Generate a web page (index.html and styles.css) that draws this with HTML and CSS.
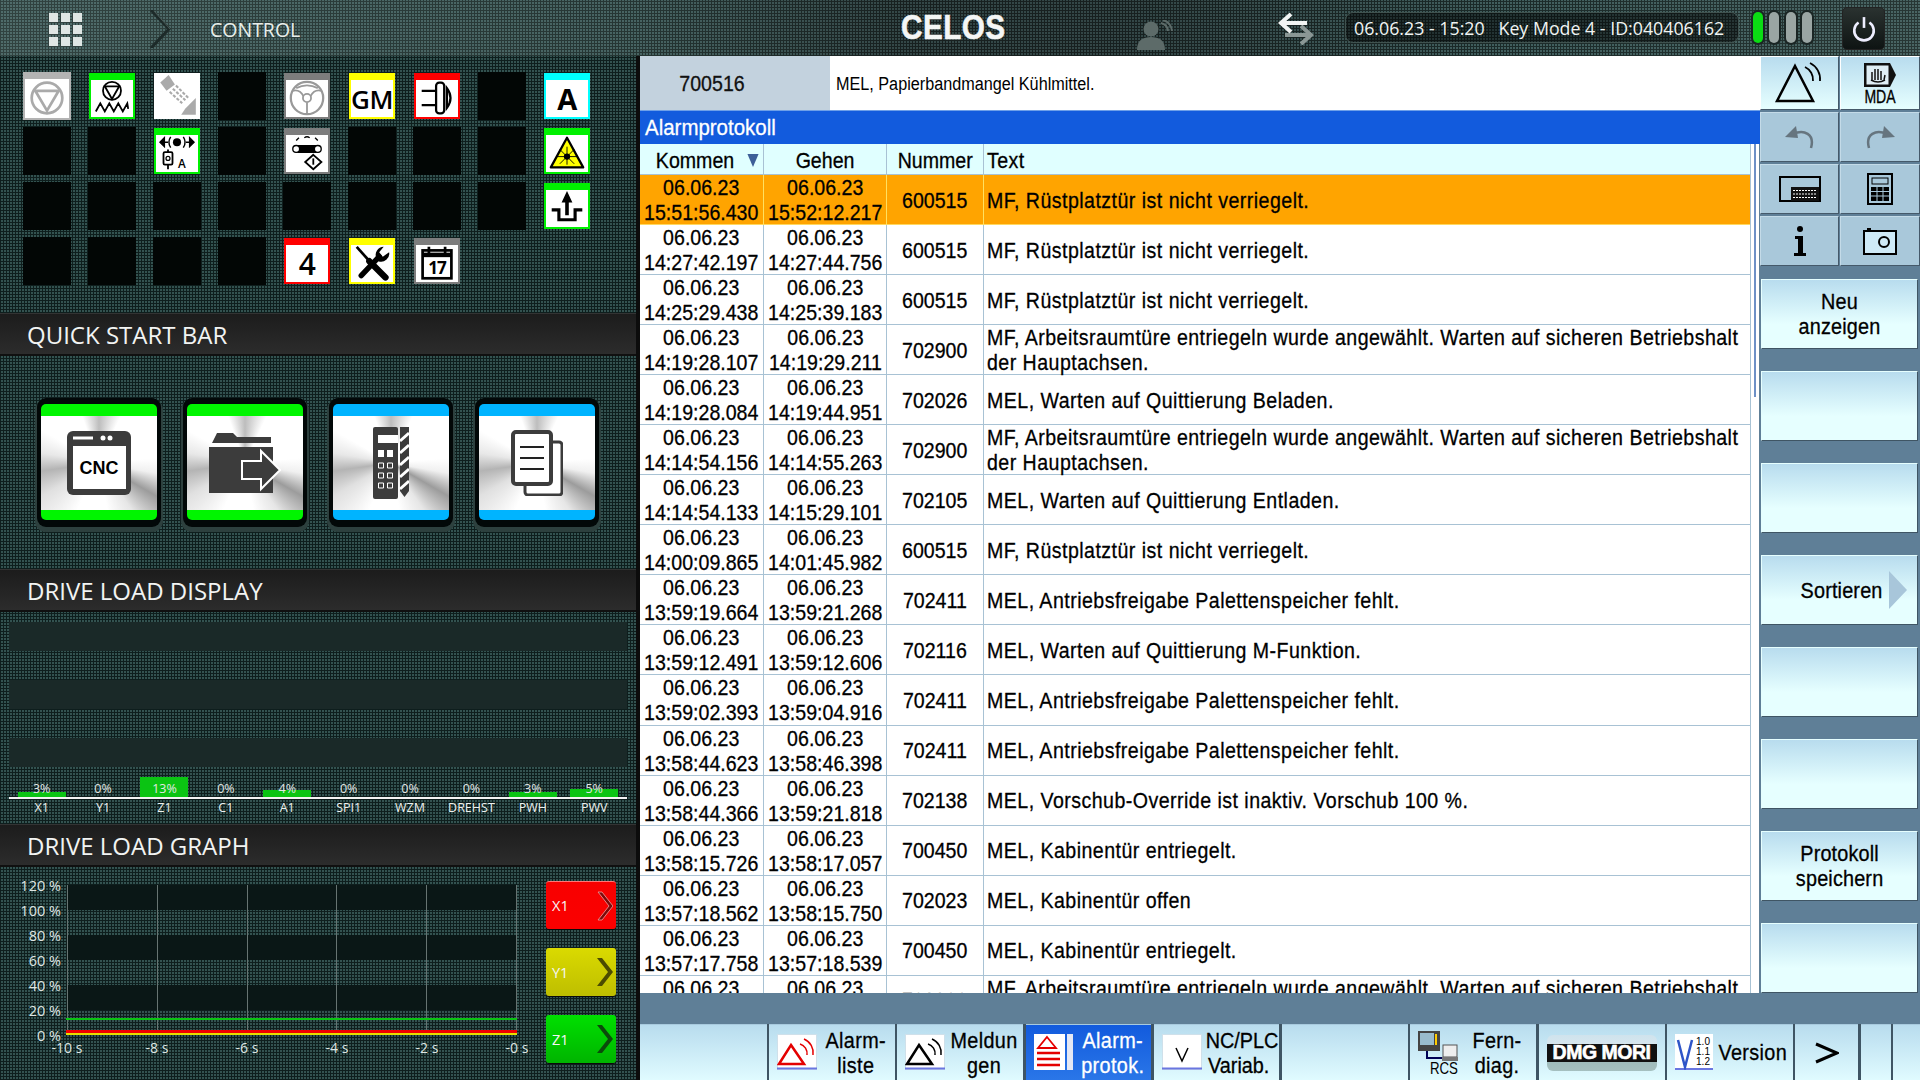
FILE: index.html
```html
<!DOCTYPE html>
<html lang="de">
<head>
<meta charset="utf-8">
<title>CELOS Alarmprotokoll</title>
<link rel="stylesheet" href="styles.css">
</head>
<body>
<header class="topbar">
  <div class="apps"><i></i><i></i><i></i><i></i><i></i><i></i><i></i><i></i><i></i></div>
  <svg class="crumb" viewBox="0 0 22 38"><path d="M2 0 L20 19 L2 38" fill="none" stroke="#1d2a29" stroke-width="3"/><path d="M5 1 L21 19" fill="none" stroke="#4b5a58" stroke-width="1"/></svg>
  <div class="ctrl">CONTROL</div>
  <div class="logo">CELOS</div>
  <svg class="person" viewBox="0 0 36 30"><circle cx="14" cy="9" r="7.5" fill="#5d6b69"/><path d="M0 30 C0 20 6 17 14 17 C22 17 28 20 28 30Z" fill="#5d6b69"/><path d="M24 3 A9 9 0 0 1 31 11 M26 0 A13 13 0 0 1 35 11" fill="none" stroke="#5d6b69" stroke-width="2"/></svg>
  <svg class="swap" viewBox="0 0 38 32"><path d="M8 22 H34 M24 13 L34 22 L24 31" fill="none" stroke="#8a9795" stroke-width="4"/><path d="M30 10 H4 M14 1 L4 10 L14 19" fill="none" stroke="#f2f4f3" stroke-width="4"/></svg>
  <div class="clock">06.06.23 - 15:20 &nbsp; Key Mode 4 - ID:040406162</div>
  <div class="leds"><i class="on"></i><i></i><i></i><i></i></div>
  <div class="power"><svg viewBox="0 0 24 24" width="26" height="26"><path d="M7 6 A9 9 0 1 0 17 6" fill="none" stroke="#eef" stroke-width="2.4"/><path d="M12 1 V11" stroke="#eef" stroke-width="2.4"/></svg></div>
</header>

<div class="main">
  <aside class="left">
    <section class="tiles">
      <div class="tile t-grey"><svg viewBox="0 0 40 40"><circle cx="20" cy="20" r="17" fill="none" stroke="#aaa" stroke-width="3"/><path d="M7 12 H33 L20 34Z" fill="none" stroke="#aaa" stroke-width="3"/></svg></div>
      <div class="tile t-green"><svg viewBox="0 0 40 40"><circle cx="20" cy="12" r="10" fill="none" stroke="#000" stroke-width="2"/><path d="M12 7 H28 L20 21Z" fill="none" stroke="#000" stroke-width="2"/><path d="M2 35 L7 26 L12 35 L17 26 L22 35 L27 26 L32 35 L37 26 L38 32" fill="none" stroke="#000" stroke-width="2"/></svg></div>
      <div class="tile t-plain"><svg viewBox="0 0 44 44"><path d="M6 9 L14 2 L20 11 L12 17Z" fill="#aaa"/><path d="M18 15 L30 26 M21 12 L33 24 M15 18 L27 29" stroke="#aaa" stroke-width="2" stroke-dasharray="3 1.5"/><path d="M30 34 L40 24 V40 H26Z" fill="#aaa"/></svg></div>
      <div class="cell"></div>
      <div class="tile t-steel"><svg viewBox="0 0 40 40"><circle cx="20" cy="20" r="18" fill="none" stroke="#999" stroke-width="2.5"/><circle cx="20" cy="20" r="4.500" fill="none" stroke="#999" stroke-width="2"/><path d="M4 12 Q12 10 16 18 M36 12 Q28 10 24 18 M20 25 V38 M8 9 Q20 3 32 9" fill="none" stroke="#999" stroke-width="2"/></svg></div>
      <div class="tile t-yellow tile-text">GM</div>
      <div class="tile t-red"><svg viewBox="0 0 40 40"><path d="M3 12 H19 M3 28 H19" fill="none" stroke="#000" stroke-width="2.500"/><rect x="19" y="3" width="9" height="34" rx="3.500" fill="#fff" stroke="#000" stroke-width="2.500"/><path d="M31 9 Q39 20 31 31Z" fill="none" stroke="#000" stroke-width="2.500"/></svg></div>
      <div class="cell"></div>
      <div class="tile t-cyan tile-text tile-a">A</div>

      <div class="cell"></div><div class="cell"></div>
      <div class="tile t-green"><svg viewBox="0 0 40 40"><circle cx="20" cy="8" r="4.5"/><path d="M13 2 Q9 8 13 14 M27 2 Q31 8 27 14" fill="none" stroke="#000" stroke-width="1.6"/><path d="M1 8 L6 3 V13Z M39 8 L34 3 V13Z M6 8 H10 M30 8 H34" stroke="#000" stroke-width="1.5"/><rect x="5" y="19" width="10" height="14" rx="1.5" fill="none" stroke="#000" stroke-width="2"/><circle cx="10" cy="26" r="2.2" fill="none" stroke="#000" stroke-width="1.4"/><path d="M10 16 V19 M10 33 V38" stroke="#000" stroke-width="2"/><text x="21" y="37" class="mini">A</text></svg></div>
      <div class="cell"></div>
      <div class="tile t-steel"><svg viewBox="0 0 40 40"><rect x="5" y="11" width="30" height="9" rx="4.5" fill="#000"/><circle cx="8" cy="15.5" r="3.8" fill="#fff" stroke="#000" stroke-width="1.5"/><circle cx="32" cy="15.5" r="3.8" fill="#fff" stroke="#000" stroke-width="1.5"/><path d="M8 6 L11 3 M17 3 Q20 1 23 3 M32 6 L29 3" stroke="#000" fill="none" stroke-width="1.5"/><path d="M27 22 L36 30 L27 38 L18 30Z" fill="none" stroke="#000" stroke-width="2"/><path d="M27 26 V33" stroke="#000" stroke-width="2"/></svg></div>
      <div class="cell"></div><div class="cell"></div><div class="cell"></div>
      <div class="tile t-green"><svg viewBox="0 0 40 40"><path d="M20 3 L38 36 H2Z" fill="#ff0" stroke="#000" stroke-width="2.5" stroke-linejoin="round"/><circle cx="20" cy="24" r="3.5"/><path d="M9 24 H31 M20 13 V33 M12 16 L28 32 M28 16 L12 32" stroke="#000" stroke-width="1"/></svg></div>

      <div class="cell"></div><div class="cell"></div><div class="cell"></div><div class="cell"></div><div class="cell"></div><div class="cell"></div><div class="cell"></div><div class="cell"></div>
      <div class="tile t-green"><svg viewBox="0 0 40 40"><path d="M20 1 L26 14 H22 V28 H18 V14 H14Z"/><path d="M3 22 H11 V33 H29 V22 H37" fill="none" stroke="#000" stroke-width="3.5"/></svg></div>

      <div class="cell"></div><div class="cell"></div><div class="cell"></div><div class="cell"></div>
      <div class="tile t-red tile-text tile-4">4</div>
      <div class="tile t-yellow"><svg viewBox="0 0 40 40"><path d="M3 2 L19 20" stroke="#000" stroke-width="3"/><path d="M17 18 L35 36" stroke="#000" stroke-width="7" stroke-linecap="round"/><path d="M8 34 L28 13" stroke="#000" stroke-width="6" stroke-linecap="round"/><path d="M25 15 A9 9 0 0 1 33 2 L28 8 L32 13 L39 8 A9 9 0 0 1 27 18Z" fill="#000"/></svg></div>
      <div class="tile t-steel"><svg viewBox="0 0 40 40"><rect x="4" y="6" width="32" height="31" fill="none" stroke="#000" stroke-width="3"/><path d="M4 11 H36" stroke="#000" stroke-width="5"/><path d="M11 2 V9 M29 2 V9" stroke="#000" stroke-width="3"/><text x="20" y="32" class="cal">17</text></svg></div>
      <div class="blank"></div><div class="blank"></div>
    </section>

    <h2 class="sect">QUICK START BAR</h2>
    <section class="quick">
      <div class="qbtn"><div class="qface green">
        <svg viewBox="0 0 64 64" width="64" height="64"><rect x="0" y="0" width="64" height="64" rx="6" fill="#3c3c3c"/><path d="M6 7 H26" stroke="#fff" stroke-width="3"/><circle cx="36" cy="7" r="2.5" fill="#fff"/><circle cx="43" cy="7" r="2.5" fill="#fff"/><rect x="6" y="15" width="53" height="43" fill="#fff"/><text x="32" y="43" class="cnc">CNC</text></svg>
      </div></div>
      <div class="qbtn"><div class="qface green">
        <svg viewBox="0 0 72 64" width="72" height="64"><path d="M3 12 L8 2 H24 L28 6 H62 V12Z" fill="#3c3c3c"/><rect x="0" y="16" width="64" height="46" fill="#3c3c3c"/><path d="M33 30 H52 V20 L71 39 L52 58 V48 H33Z" fill="#3c3c3c" stroke="#fff" stroke-width="2"/></svg>
      </div></div>
      <div class="qbtn"><div class="qface blue">
        <svg viewBox="0 0 36 72" width="36" height="72"><rect x="0" y="0" width="25" height="72" rx="2" fill="#3c3c3c"/><rect x="5" y="8" width="20" height="8" fill="#fff"/><path d="M5 23 H11 V30 H5Z M14 23 H20 V30 H14Z" fill="#fff"/><path d="M5.500 36 H10.500 V41 H5.500Z M14.500 36 H19.500 V41 H14.500Z M5.500 46 H10.500 V51 H5.500Z M14.500 46 H19.500 V51 H14.500Z M5.500 56 H10.500 V61 H5.500Z M14.500 56 H19.500 V61 H14.500Z" fill="none" stroke="#fff"/><path d="M27 0 H36 V64 L31.500 70 L27 64Z" fill="#3c3c3c"/><path d="M27 14 L36 6 M27 26 L36 18 M27 38 L36 30 M27 50 L36 42 M27 62 L36 54" stroke="#fff" stroke-width="3"/></svg>
      </div></div>
      <div class="qbtn"><div class="qface blue">
        <svg viewBox="0 0 52 66" width="52" height="66"><rect x="14" y="12" width="37" height="53" rx="3" fill="#fff" stroke="#3c3c3c" stroke-width="3"/><rect x="2" y="2" width="38" height="52" rx="3" fill="#fff" stroke="#3c3c3c" stroke-width="4"/><path d="M9 17 H33 M9 28 H33 M9 39 H33" stroke="#222" stroke-width="2"/></svg>
      </div></div>
    </section>

    <h2 class="sect">DRIVE LOAD DISPLAY</h2>
    <section class="load">
      <div class="bands"><div class="band"></div><div class="band"></div><div class="band"></div></div>
      <div class="bars">
        <div class="bar"><span>3%</span><i class="b5"></i></div>
        <div class="bar"><span>0%</span></div>
        <div class="bar"><span>13%</span><i class="b20"></i></div>
        <div class="bar"><span>0%</span></div>
        <div class="bar"><span>4%</span><i class="b7"></i></div>
        <div class="bar"><span>0%</span></div>
        <div class="bar"><span>0%</span></div>
        <div class="bar"><span>0%</span></div>
        <div class="bar"><span>3%</span><i class="b5"></i></div>
        <div class="bar"><span>5%</span><i class="b8"></i></div>
      </div>
      <div class="axes"><span>X1</span><span>Y1</span><span>Z1</span><span>C1</span><span>A1</span><span>SPI1</span><span>WZM</span><span>DREHST</span><span>PWH</span><span>PWV</span></div>
    </section>

    <h2 class="sect">DRIVE LOAD GRAPH</h2>
    <section class="graph">
      <div class="ylabels"><span>120 %</span><span>100 %</span><span>80 %</span><span>60 %</span><span>40 %</span><span>20 %</span><span>0 %</span></div>
      <div class="plotwrap">
        <div class="plot">
          <i class="v"></i><i class="v"></i><i class="v"></i><i class="v"></i><i class="v"></i>
          <b class="ln lg"></b><b class="ln lr"></b><b class="ln ly"></b>
        </div>
        <div class="xlabels"><span>-10 s</span><span>-8 s</span><span>-6 s</span><span>-4 s</span><span>-2 s</span><span>-0 s</span></div>
      </div>
      <div class="axbtns">
        <div class="axbtn red">X1<svg viewBox="0 0 18 30" width="18" height="30"><path d="M3 1 L14 15 L3 29 H7 L18 15 L7 1Z" fill="#7a0a0a" stroke="#f0a0a0" stroke-width=".8"/></svg></div>
        <div class="axbtn yel">Y1<svg viewBox="0 0 18 30" width="18" height="30"><path d="M2 1 L13 15 L2 29 H7 L18 15 L7 1Z" fill="#4c4c00"/></svg></div>
        <div class="axbtn grn">Z1<svg viewBox="0 0 18 30" width="18" height="30"><path d="M2 1 L13 15 L2 29 H7 L18 15 L7 1Z" fill="#0b4a0b"/></svg></div>
      </div>
    </section>
  </aside>

  <main class="right">
    <div class="work">
      <div class="content">
        <div class="msg"><div class="msgnum"><p>700516</p></div><div class="msgtxt"><p>MEL, Papierbandmangel Kühlmittel.</p></div></div>
        <div class="title"><p>Alarmprotokoll</p></div>
        <div class="tablewrap">
          <div class="table">
            <div class="row head"><div class="kom"><p>Kommen</p><svg class="sort" viewBox="0 0 12 14" width="12" height="13"><path d="M0 0 H12 L6 14Z" fill="#3d5f98"/></svg></div><div><p>Gehen</p></div><div><p>Nummer</p></div><div class="t"><p>Text</p></div></div>
            <div class="row act"><div><p>06.06.23<br>15:51:56.430</p></div><div><p>06.06.23<br>15:52:12.217</p></div><div><p>600515</p></div><div class="t"><p>MF, Rüstplatztür ist nicht verriegelt.</p></div></div>
            <div class="row"><div><p>06.06.23<br>14:27:42.197</p></div><div><p>06.06.23<br>14:27:44.756</p></div><div><p>600515</p></div><div class="t"><p>MF, Rüstplatztür ist nicht verriegelt.</p></div></div>
            <div class="row"><div><p>06.06.23<br>14:25:29.438</p></div><div><p>06.06.23<br>14:25:39.183</p></div><div><p>600515</p></div><div class="t"><p>MF, Rüstplatztür ist nicht verriegelt.</p></div></div>
            <div class="row"><div><p>06.06.23<br>14:19:28.107</p></div><div><p>06.06.23<br>14:19:29.211</p></div><div><p>702900</p></div><div class="t"><p>MF, Arbeitsraumtüre entriegeln wurde angewählt. Warten auf sicheren Betriebshalt<br>der Hauptachsen.</p></div></div>
            <div class="row"><div><p>06.06.23<br>14:19:28.084</p></div><div><p>06.06.23<br>14:19:44.951</p></div><div><p>702026</p></div><div class="t"><p>MEL, Warten auf Quittierung Beladen.</p></div></div>
            <div class="row"><div><p>06.06.23<br>14:14:54.156</p></div><div><p>06.06.23<br>14:14:55.263</p></div><div><p>702900</p></div><div class="t"><p>MF, Arbeitsraumtüre entriegeln wurde angewählt. Warten auf sicheren Betriebshalt<br>der Hauptachsen.</p></div></div>
            <div class="row"><div><p>06.06.23<br>14:14:54.133</p></div><div><p>06.06.23<br>14:15:29.101</p></div><div><p>702105</p></div><div class="t"><p>MEL, Warten auf Quittierung Entladen.</p></div></div>
            <div class="row"><div><p>06.06.23<br>14:00:09.865</p></div><div><p>06.06.23<br>14:01:45.982</p></div><div><p>600515</p></div><div class="t"><p>MF, Rüstplatztür ist nicht verriegelt.</p></div></div>
            <div class="row"><div><p>06.06.23<br>13:59:19.664</p></div><div><p>06.06.23<br>13:59:21.268</p></div><div><p>702411</p></div><div class="t"><p>MEL, Antriebsfreigabe Palettenspeicher fehlt.</p></div></div>
            <div class="row"><div><p>06.06.23<br>13:59:12.491</p></div><div><p>06.06.23<br>13:59:12.606</p></div><div><p>702116</p></div><div class="t"><p>MEL, Warten auf Quittierung M-Funktion.</p></div></div>
            <div class="row"><div><p>06.06.23<br>13:59:02.393</p></div><div><p>06.06.23<br>13:59:04.916</p></div><div><p>702411</p></div><div class="t"><p>MEL, Antriebsfreigabe Palettenspeicher fehlt.</p></div></div>
            <div class="row"><div><p>06.06.23<br>13:58:44.623</p></div><div><p>06.06.23<br>13:58:46.398</p></div><div><p>702411</p></div><div class="t"><p>MEL, Antriebsfreigabe Palettenspeicher fehlt.</p></div></div>
            <div class="row"><div><p>06.06.23<br>13:58:44.366</p></div><div><p>06.06.23<br>13:59:21.818</p></div><div><p>702138</p></div><div class="t"><p>MEL, Vorschub-Override ist inaktiv. Vorschub 100 %.</p></div></div>
            <div class="row"><div><p>06.06.23<br>13:58:15.726</p></div><div><p>06.06.23<br>13:58:17.057</p></div><div><p>700450</p></div><div class="t"><p>MEL, Kabinentür entriegelt.</p></div></div>
            <div class="row"><div><p>06.06.23<br>13:57:18.562</p></div><div><p>06.06.23<br>13:58:15.750</p></div><div><p>702023</p></div><div class="t"><p>MEL, Kabinentür offen</p></div></div>
            <div class="row"><div><p>06.06.23<br>13:57:17.758</p></div><div><p>06.06.23<br>13:57:18.539</p></div><div><p>700450</p></div><div class="t"><p>MEL, Kabinentür entriegelt.</p></div></div>
            <div class="row"><div><p>06.06.23<br>13:56:58.120</p></div><div><p>06.06.23<br>13:57:01.344</p></div><div><p>702900</p></div><div class="t"><p>MF, Arbeitsraumtüre entriegeln wurde angewählt. Warten auf sicheren Betriebshalt<br>der Hauptachsen.</p></div></div>
          </div>
          <div class="scroll"><i></i></div>
        </div>
      </div>
      <div class="side">
        <div class="keys4">
          <div class="sk grad"><svg viewBox="0 0 52 44" width="52" height="44"><path d="M21 5 L39 40 H3Z" fill="none" stroke="#000" stroke-width="2.500"/><path d="M31 6 A14 14 0 0 1 39 20 M36 2 A18 18 0 0 1 46 20" fill="none" stroke="#000" stroke-width="1.800"/></svg></div>
          <div class="sk grad mda"><svg viewBox="0 0 34 26" width="34" height="26"><path d="M1 1 H27 L33 13 L27 25 H1Z" fill="#111"/><rect x="3" y="3" width="23" height="20" fill="#dfeef5" stroke="#111"/><path d="M9 18 V10 M12 18 V7 M15 18 V7 M18 18 V9 M21 18 L22 13 M8 18 Q15 22 22 18" fill="none" stroke="#111" stroke-width="1.500"/></svg><span>MDA</span></div>
          <div class="sk flat"><svg viewBox="0 0 30 24" width="30" height="24"><path d="M26 23 C30 9 19 4 8 9" fill="none" stroke="#66757f" stroke-width="2.500"/><path d="M0 12 L11 1 L13 13Z" fill="#66757f"/></svg></div>
          <div class="sk flat"><svg viewBox="0 0 30 24" width="30" height="24"><path d="M4 23 C0 9 11 4 22 9" fill="none" stroke="#66757f" stroke-width="2.500"/><path d="M30 12 L19 1 L17 13Z" fill="#66757f"/></svg></div>
          <div class="sk flat"><svg viewBox="0 0 42 26" width="42" height="26"><path d="M1 1 H41 V25 H1Z" fill="none" stroke="#000" stroke-width="2"/><rect x="12" y="11" width="28" height="14" fill="#111"/><path d="M14 14.500 H38 M14 18 H38 M14 21.500 H38" stroke="#fff" stroke-dasharray="2 1"/></svg></div>
          <div class="sk flat"><svg viewBox="0 0 26 32" width="26" height="32"><rect x="1" y="1" width="24" height="30" fill="none" stroke="#000" stroke-width="2"/><rect x="5" y="5" width="16" height="6" fill="none" stroke="#000"/><path d="M4 14 H22 V28 H4Z" fill="#000"/><path d="M4 18.500 H22 M4 23 H22 M10 14 V28 M16 14 V28" stroke="#a9c8da"/></svg></div>
          <div class="sk flat"><svg viewBox="0 0 14 30" width="14" height="30"><circle cx="7" cy="3" r="3"/><path d="M2 10 H10 V27 H13 V30 H1 V27 H5 V13 H2Z"/></svg></div>
          <div class="sk flat"><svg viewBox="0 0 34 28" width="34" height="28"><path d="M4 1 H8 V4 H4Z"/><rect x="1" y="4" width="32" height="23" fill="#cfeaf7" stroke="#000" stroke-width="2"/><circle cx="21" cy="15" r="5" fill="none" stroke="#000" stroke-width="2"/></svg></div>
        </div>
        <div class="vkey"><p>Neu<br>anzeigen</p></div>
        <div class="vkey"></div>
        <div class="vkey"></div>
        <div class="vkey sortkey"><p>Sortieren</p><svg viewBox="0 0 18 38" width="18" height="38"><path d="M0 0 L18 19 L0 38Z" fill="#a8c6da"/></svg></div>
        <div class="vkey"></div>
        <div class="vkey"></div>
        <div class="vkey"><p>Protokoll<br>speichern</p></div>
        <div class="vkey"></div>
      </div>
    </div>
    <div class="strip"></div>
    <nav class="softbar">
      <div class="soft"></div>
      <div class="soft"><svg class="sico" viewBox="0 0 40 36" width="40" height="36"><rect x="0.500" y="0.500" width="39" height="35" fill="#fff" stroke="#cfe0ea"/><path d="M0 34.500 H40" stroke="#6a76e0" stroke-width="2"/><path d="M14 11 L27 30 H2Z" fill="none" stroke="#e40000" stroke-width="2.500"/><path d="M23 10 A10 10 0 0 1 30 21 M27 5 A15 15 0 0 1 36 21" fill="none" stroke="#e40000" stroke-width="1.500"/></svg><span>Alarm-<br>liste</span></div>
      <div class="soft"><svg class="sico" viewBox="0 0 40 36" width="40" height="36"><rect x="0.500" y="0.500" width="39" height="35" fill="#fff" stroke="#cfe0ea"/><path d="M0 34.500 H40" stroke="#6a76e0" stroke-width="2"/><path d="M14 11 L27 30 H2Z" fill="none" stroke="#000" stroke-width="2.500"/><path d="M23 10 A10 10 0 0 1 30 21 M27 5 A15 15 0 0 1 36 21" fill="none" stroke="#000" stroke-width="1.500"/></svg><span>Meldun<br>gen</span></div>
      <div class="soft sel"><svg class="sico" viewBox="0 0 40 36" width="40" height="36"><rect width="31" height="36" fill="#fff"/><rect x="33" width="6" height="36" fill="#e4e8f4"/><path d="M13 3 L22 14 H4Z" fill="none" stroke="#e40000" stroke-width="1.800"/><path d="M3 19 H26 M3 25 H26 M3 31 H26" stroke="#e40000" stroke-width="2.500"/></svg><span>Alarm-<br>protok.</span></div>
      <div class="soft nc"><svg class="sico" viewBox="0 0 40 36" width="40" height="36"><rect x="0.500" y="0.500" width="39" height="35" fill="#fff" stroke="#cfe0ea"/><path d="M0 34.500 H40" stroke="#6a76e0" stroke-width="2"/><path d="M14 14 L20 27 L26 14" fill="none" stroke="#000" stroke-width="1.500"/></svg><span>NC/PLC<br>Variab.</span></div>
      <div class="soft"></div>
      <div class="soft fern"><svg class="sico" viewBox="0 0 40 36" width="40" height="36"><rect x="0" y="0" width="22" height="20" fill="#444"/><rect x="2" y="2" width="14" height="12" fill="#9bc"/><path d="M18 3 V14" stroke="#fc0" stroke-width="2"/><path d="M9 20 V27 H26" fill="none" stroke="#005" stroke-width="2"/><rect x="25" y="14" width="14" height="12" fill="#eee" stroke="#555"/><rect x="24" y="26" width="16" height="4" fill="#777"/></svg><b>RCS</b><span>Fern-<br>diag.</span></div>
      <div class="soft dmg"><div class="dmgplate"><span>DMG MORI</span></div></div>
      <div class="soft ver"><svg class="sico" viewBox="0 0 38 36" width="38" height="36"><rect width="38" height="36" fill="#fff"/><path d="M0 35 H38" stroke="#6a76e0" stroke-width="2"/><path d="M3 6 L10 33 L17 6" fill="none" stroke="#2f55c8" stroke-width="2.500"/><text x="28" y="11" class="vno">1.0</text><text x="28" y="21" class="vno">1.1</text><text x="28" y="31" class="vno">1.2</text></svg><span>Version</span></div>
      <div class="soft more"><svg viewBox="0 0 24 22" width="24" height="22"><path d="M1 2 L22 11 L1 20" fill="none" stroke="#000" stroke-width="3"/></svg></div>
      <div class="soft"></div>
      <div class="soft"></div>
    </nav>
  </main>
</div>
</body>
</html>
```
FILE: styles.css
```css
* { box-sizing: border-box; }
html, body { margin: 0; padding: 0; }
p { margin: 0; }
body {
  width: 1920px; height: 1080px; overflow: hidden;
  font-family: "Open Sans", "Noto Sans", sans-serif;
  background: #000;
  --dots: repeating-linear-gradient(0deg, #0e1e1d 0 1px, transparent 1px 3px), repeating-linear-gradient(90deg, #0e1e1d 0 1px, transparent 1px 3px);
}
.tiles, .quick, .load, .graph { background-color: #335250; background-image: var(--dots); }

/* top bar */
.topbar {
  height: 56px; position: relative; color: #eef;
  background-color: #395959;
  background-image:
    linear-gradient(90deg, rgba(130,150,145,.3) 0, rgba(120,135,130,.22) 640px, rgba(40,36,36,.35) 900px, rgba(40,36,36,.35) 1150px, rgba(120,130,125,.12) 1500px, rgba(130,140,135,.22) 100%),
    var(--dots);
}
.apps {
  position: absolute; left: 49px; top: 13px;
  display: grid; grid-template-columns: repeat(3, 9px); grid-auto-rows: 9px; gap: 3px;
}
.apps i { background: #dfe6e4; }
.crumb { position: absolute; left: 149px; top: 10px; width: 22px; height: 38px; }
.ctrl { position: absolute; left: 210px; top: 16px; font-size: 19.500px; line-height: 28px; color: #e8eeea; }
.logo {
  position: absolute; left: 892px; top: 9px; width: 120px; text-align: center;
  font: bold 35px/36px "Liberation Sans", sans-serif; color: #f4f6f5;
  transform: scaleX(.85); -webkit-text-stroke: .6px #f4f6f5; letter-spacing: .5px;
}
.person { position: absolute; left: 1137px; top: 20px; width: 36px; height: 30px; }
.swap { position: absolute; left: 1277px; top: 13px; width: 38px; height: 32px; }
.clock {
  position: absolute; left: 1345px; top: 12px; width: 394px; height: 31px;
  border-radius: 8px; border: 1px solid #40524f; background: rgba(0,0,0,.45);
  font-size: 17.800px; line-height: 30px; padding-left: 8px; color: #f0f3f2; white-space: nowrap;
}
.leds { position: absolute; left: 1753px; top: 12px; display: flex; gap: 6.300px; }
.leds i { width: 10px; height: 31px; border-radius: 6px; background: #9aa5a3; box-shadow: 0 0 0 2px #1a2524; }
.leds i.on { background: #0bdc14; }
.power {
  position: absolute; left: 1842px; top: 7px; width: 43px; height: 43px; border-radius: 5px;
  background: linear-gradient(#2a3230, #0e1413); border: 1px solid #222;
  display: flex; align-items: center; justify-content: center;
}

/* layout */
.main { display: flex; height: 1024px; }
.left { width: 640px; background: #0c0c0c; display: flex; flex-direction: column; }
.left > * { width: 636px; flex: none; }
.tiles {
  height: 257px; padding: 16px 0 0 23px;
  display: grid; grid-template-columns: repeat(9, 48px); grid-auto-rows: 48px; column-gap: 17px; row-gap: 7px;
  align-content: start;
}
.cell { background: #020605; }
.blank { background: transparent; }
.tile {
  background: #fff; margin: 1px; border: 2px solid; border-top-width: 7px;
  display: flex; align-items: center; justify-content: center;
}
.tile svg { width: 36px; height: 36px; display: block; margin-top: -1px; }
.t-grey { margin: 0; border-color: #b3b3b3; }
.t-green { border-color: #00f000; }
.t-plain { border-color: #fff; border-width: 0; }
.t-plain svg { width: 46px; height: 46px; }
.t-steel { border-color: #7d7d7d; }
.t-yellow { border-color: #ffff00; }
.t-red { border-color: #ff0000; }
.t-cyan { border-color: #00ffff; }
.tile-text { font-size: 26px; color: #000; font-weight: 600; line-height: 1; letter-spacing: -.5px; }
.tile-a { font-weight: 700; font-size: 29px; }
.tile-4 { font-size: 30px; }
.mini { font: 600 13px "Open Sans"; }
.cal { font: 700 19px "Open Sans"; text-anchor: middle; letter-spacing: -1px; }

.sect {
  height: 43px; margin: 0; padding: 0 0 0 27px;
  background: linear-gradient(#1c1c1c, #2c2c2c);
  border-top: 1px solid #333; border-bottom: 2px solid #101010;
  font-size: 24px; font-weight: 400; line-height: 42px; color: #f2f4f3;
}
.quick {
  height: 213px; padding: 42px 0 0 37px; display: flex; gap: 22px;
}
.qbtn {
  width: 124px; height: 129px; padding: 6px 4px; border-radius: 9px;
  background: #020808; box-shadow: 0 3px 0 2px #2d403e;
}
.qface {
  height: 116px; border-radius: 5px; border-top: 12px solid; border-bottom: 10px solid;
  background: conic-gradient(#bdbdbd 0deg, #fff 25deg, #fff 85deg, #f0f0f0 100deg, #9c9c9c 120deg, #e6e6e6 145deg, #fff 170deg, #fff 205deg, #e0e0e0 240deg, #b4b4b4 262deg, #e8e8e8 280deg, #fff 300deg, #fff 340deg, #bdbdbd 360deg);
  display: flex; align-items: center; justify-content: center;
}
.qface.green { border-color: #00f500; }
.qface.blue { border-color: #00b4ff; }
.cnc { font: 700 18px "Liberation Sans"; text-anchor: middle; }

.load {
  height: 212px; padding: 10px 9px 0;
  display: flex; flex-direction: column;
}
.bands { display: flex; flex-direction: column; gap: 29px; flex: none; }
.band { height: 29px; background: #1a2928; }
.bars {
  height: 32px; padding: 0 2px; flex: none;
  border-bottom: 2px solid #f4f4f4; display: grid; grid-template-columns: repeat(10, 61.400px);
}
.bar { position: relative; text-align: center; height: 30px; }
.bar span { position: absolute; left: 0; right: 0; bottom: 0; font-size: 12.500px; line-height: 17px; color: #e3e8e6; z-index: 1; }
.bar i { position: absolute; left: 6.500px; width: 48px; bottom: 0; background: #0bc413; }
.b5 { height: 5px; } .b7 { height: 7px; } .b8 { height: 8px; } .b20 { height: 20px; }
.axes {
  padding: 0 2px; display: grid; grid-template-columns: repeat(10, 61.400px);
  text-align: center; font-size: 12.500px; line-height: 18px; color: #eef1ef; flex: none;
}

.graph { height: 213px; display: flex; }
.ylabels {
  width: 61px; padding-top: 6px; display: grid; grid-auto-rows: 25px; text-align: right;
  font-size: 14.500px; line-height: 25px; color: #dfe5e3; flex: none;
}
.plotwrap { margin: 18px 0 0 6px; width: 450px; flex: none; }
.plot {
  width: 450px; height: 150px; position: relative; display: grid; grid-template-columns: repeat(5, 1fr);
  background: repeating-linear-gradient(#0a1716 0 25px, transparent 25px 50px);
  border-left: 1px solid #667371;
}
.plot .v { border-right: 1px solid #667371; }
.ln { position: absolute; left: -2px; right: 0; display: block; }
.lg { top: 133px; height: 2px; background: #0bc413; }
.lr { top: 145px; height: 3px; background: #f00000; }
.ly { top: 148px; height: 2px; background: #e6e000; }
.xlabels {
  display: flex; justify-content: space-between; width: 490px; margin: 4px 0 0 -20px;
  font-size: 14px; line-height: 18px; color: #dfe5e3;
}
.xlabels span { width: 40px; text-align: center; }
.axbtns { margin: 14px 0 0 29px; display: flex; flex-direction: column; gap: 19px; }
.axbtn {
  width: 70px; height: 48px; border-radius: 3px; padding: 0 3px 0 6px;
  display: flex; align-items: center; justify-content: space-between;
  font-size: 14.500px; color: #f6f6f6;
  box-shadow: 0 1px 0 #0a0a0a;
}
.red { background: linear-gradient(#f80000, #fb0000); border-top: 1px solid #ff7777; }
.yel { background: linear-gradient(#dada00, #bebe00); }
.grn { background: linear-gradient(#00e000, #00b400); }

/* right */
.right { width: 1280px; display: flex; flex-direction: column; background: #5f7f97; font-family: "Liberation Sans", sans-serif; }
.work { height: 937px; display: flex; }
.content { width: 1120px; display: flex; flex-direction: column; }
.msg { height: 54px; display: flex; background: #fff; }
.msgnum { width: 190px; background: #c3d2de; text-align: center; line-height: 56px; font-size: 22px; color: #111; padding-right: 46px; -webkit-text-stroke: .3px #111; }
.msgnum p { transform: scaleX(.89); }
.msgtxt { padding-left: 6px; line-height: 56px; color: #000; font-size: 18px; }
.msgtxt p { transform: scaleX(.9); transform-origin: left; }
.title { height: 34px; background: #125bdd; border-top: 1px solid #6ea0e8; color: #fff; font-size: 22px; line-height: 33px; padding-left: 5px; -webkit-text-stroke: .3px #fff; }
.title p { transform: scaleX(.93); transform-origin: left; }
.tablewrap { height: 849px; display: flex; overflow: hidden; }
.table { width: 1110px; font-size: 22px; color: #000; flex: none; -webkit-text-stroke: .3px #000; }
.row {
  display: grid; grid-template-columns: 124px 123px 96.500px 766.500px;
  height: 50.060px; border-bottom: 1px solid #a8c2d4; background: #fff;
}
.row > div {
  display: flex; align-items: center; justify-content: center; text-align: center;
  line-height: 25px; border-right: 1px solid #a8c2d4; min-width: 0;
}
.row p { transform: scaleX(.89); white-space: nowrap; flex: none; }
.row > .t { justify-content: flex-start; text-align: left; padding-left: 3px; border-right: 0; }
.t p { transform-origin: left; letter-spacing: .52px; }
.head { height: 31px; background: #e0ffff; }
.head > div { line-height: 32px; }
.head > div > p { position: relative; top: 1px; }
.row > .kom { justify-content: flex-start; padding-left: 11px; }
.sort { margin-left: 8px; flex: none; }
.act { background: #ffa400; border-bottom-color: #ffd860; }
.act > div { border-right-color: #ffe060; }
.scroll { width: 9px; background: #fff; border-left: 1px solid #a8c2d4; position: relative; }
.scroll i { position: absolute; left: 3px; width: 2px; top: 0; height: 253px; background: #6d90c6; }

.side { width: 160px; display: flex; flex-direction: column; }
.keys4 { display: grid; grid-template-columns: 79px 80px; column-gap: 1px; grid-template-rows: 54px 50px 50px 50px; row-gap: 2px; height: 210px; margin-bottom: 13px; }
.sk { display: flex; align-items: center; justify-content: center; border-right: 1px solid #45596a; border-bottom: 1px solid #45596a; }
.grad { background: linear-gradient(#b8dcee, #e6ffff); border-top: 1px solid #fff; border-left: 1px solid #fff; }
.flat { background: #a9c8da; border-top: 1px solid #c4dbe8; border-left: 1px solid #c4dbe8; }
.mda { flex-direction: column; font-size: 18px; line-height: 19px; -webkit-text-stroke: .3px #000; padding-top: 2px; }
.mda span { transform: scaleX(.78); }
.vkey {
  height: 70px; margin: 0 2px 22px 1px; flex: none;
  background: linear-gradient(#b8dcee, #e6ffff 65%);
  border: 1px solid #e6ffff; border-right-color: #3f5564; border-bottom-color: #3f5564;
  display: flex; align-items: center; justify-content: center; text-align: center;
  font-size: 22px; line-height: 25px; color: #000; -webkit-text-stroke: .3px #000;
}
.vkey p { transform: scaleX(.9); letter-spacing: .2px; }
.vkey:last-child { margin-bottom: 0; }
.sortkey { padding-left: 24px; gap: 2px; }
.strip { height: 31px; background: #5f7f97; }
.softbar {
  height: 56px; display: grid; column-gap: 2.500px;
  grid-template-columns: 126.500px 125.500px 126px 125.500px 125.500px 126px 126px 126px 125.500px 63px 30px 30px;
  background: #3f5564;
}
.soft {
  display: flex; align-items: center; position: relative;
  background: linear-gradient(#b8dcee, #e0fbff);
  border-top: 1px solid #a8cade; font-size: 22px; line-height: 25px; color: #000; text-align: center;
  padding-left: 8px;
}
.soft span { flex: 1; min-width: 0; white-space: nowrap; transform: scaleX(.9); letter-spacing: .4px; -webkit-text-stroke: .3px #000; }
.nc span { letter-spacing: 0; margin-right: 4px; }
.sel { background: linear-gradient(#125bdd, #2a76e8); color: #fff; }
.sel span { -webkit-text-stroke: .3px #fff; }
.sico { flex: none; align-self: flex-start; margin-top: 9px; }
.fern b { position: absolute; left: 16px; bottom: 2px; font-weight: 400; font-size: 17px; line-height: 18px; transform: scaleX(.78); }
.fern .sico { margin-top: 6px; }
.dmg { padding: 0 8px; }
.dmgplate {
  width: 110px; height: 36px; border-radius: 6px;
  background: linear-gradient(#cfe3ed 0, #d6e6ee 24%, #111 24%, #111 76%, #9fbcbc 76%, #a5c0c0 100%);
  display: flex; align-items: center; justify-content: center;
}
.dmgplate span { flex: none; font: 900 19.500px "Liberation Sans"; color: #fff; -webkit-text-stroke: .6px #fff; letter-spacing: -.5px; transform: none; }
.vno { font: 400 10px "Liberation Sans"; text-anchor: middle; }
.more { justify-content: center; padding: 0; }
```
